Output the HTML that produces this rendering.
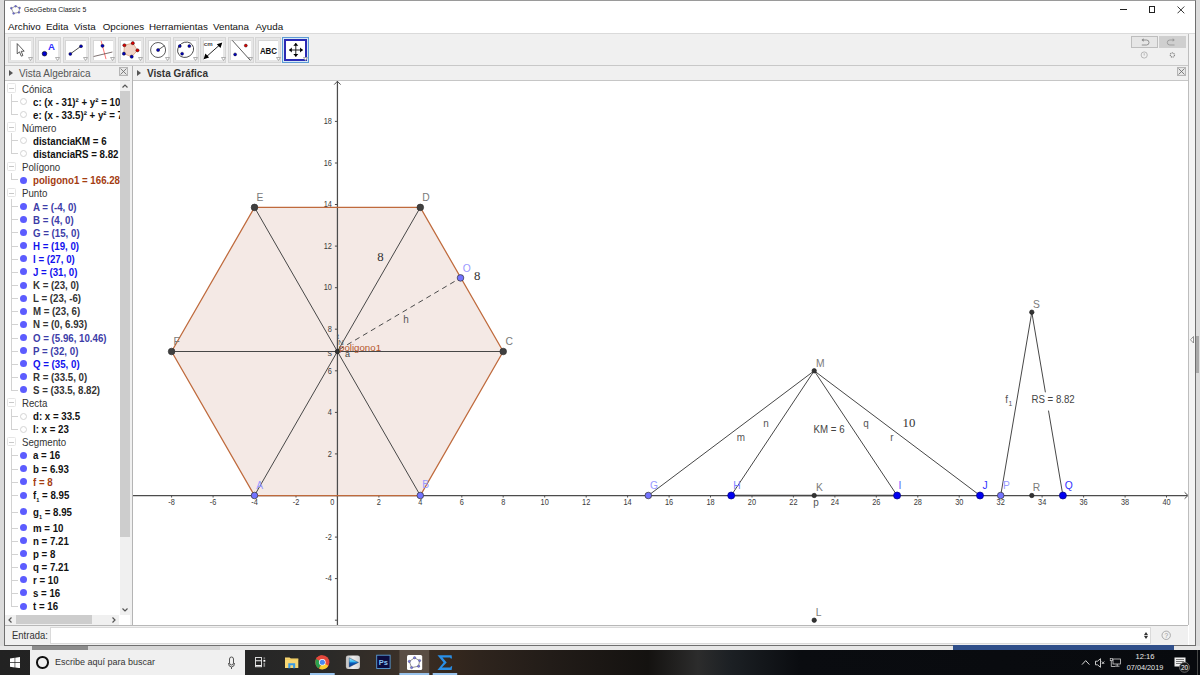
<!DOCTYPE html><html><head><meta charset="utf-8"><style>
*{margin:0;padding:0;box-sizing:border-box}
html,body{width:1200px;height:675px;overflow:hidden;background:#dcdcdc;font-family:"Liberation Sans", sans-serif;}
.a{position:absolute;white-space:nowrap}
</style></head><body>
<div class="a" style="left:4px;top:0;width:1192px;height:646px;background:#fff;border:1px solid #6f6f6f;border-top-color:#9a9a9a"></div>
<svg class="a" style="left:9.5px;top:4.5px" width="11" height="10" viewBox="0 0 11 10">
<path d="M5.6 1.2 L9.6 2.9 L8.9 7.4 L3.6 8.4 L1.3 3.2 Z" fill="none" stroke="#8a8a8a" stroke-width="0.8"/>
<g fill="#6e6ee0" stroke="#3a3a6a" stroke-width="0.3"><circle cx="5.6" cy="1.2" r="0.95"/><circle cx="9.6" cy="2.9" r="0.95"/><circle cx="8.9" cy="7.4" r="0.95"/><circle cx="3.6" cy="8.4" r="0.95"/><circle cx="1.3" cy="3.2" r="0.95"/></g></svg>
<div class="a" style="left:23.5px;top:5.74px;font-size:8.1px;line-height:1;color:#1a1a1a;transform:scaleX(0.855);transform-origin:0 0">GeoGebra Classic 5</div>
<div class="a" style="left:1120.4px;top:9px;width:6.6px;height:1px;background:#222"></div>
<div class="a" style="left:1148.6px;top:6px;width:6.6px;height:6.9px;border:1px solid #222"></div>
<svg class="a" style="left:1176.5px;top:5.8px" width="8" height="8" viewBox="0 0 8 8"><path d="M0.5 0.5L7.3 7.3M7.3 0.5L0.5 7.3" stroke="#222" stroke-width="0.9"/></svg>
<div class="a" style="left:8px;top:22.30px;font-size:9.8px;line-height:1;color:#111">Archivo</div>
<div class="a" style="left:46px;top:22.30px;font-size:9.8px;line-height:1;color:#111">Edita</div>
<div class="a" style="left:74px;top:22.30px;font-size:9.8px;line-height:1;color:#111">Vista</div>
<div class="a" style="left:102.7px;top:22.30px;font-size:9.8px;line-height:1;color:#111">Opciones</div>
<div class="a" style="left:149px;top:22.30px;font-size:9.8px;line-height:1;color:#111">Herramientas</div>
<div class="a" style="left:213px;top:22.30px;font-size:9.8px;line-height:1;color:#111">Ventana</div>
<div class="a" style="left:255.5px;top:22.30px;font-size:9.8px;line-height:1;color:#111">Ayuda</div>
<div class="a" style="left:5px;top:33px;width:1190px;height:1px;background:#dadada"></div>
<div class="a" style="left:5px;top:34px;width:1183px;height:32px;background:#f0f0f0;border-bottom:1px solid #c8c8c8"></div>
<div class="a" style="left:1188px;top:34px;width:1px;height:591px;background:#bdbdbd"></div>
<div class="a" style="left:1189px;top:34px;width:6px;height:611px;background:#f4f4f4"></div>
<div class="a" style="left:7.50px;top:37px;width:26px;height:26px;background:#e6e6e6;border:1px solid #d6d6d6"></div>
<div class="a" style="left:10.00px;top:40px;width:20.5px;height:19.5px;background:#fff;border-top:1px solid #d6d6d6;border-left:1px solid #d6d6d6"></div>
<svg class="a" style="left:27.70px;top:57px" width="5" height="4"><path d="M0.5 0.5 L4.5 0.5 L2.5 3.5Z" fill="#fff" stroke="#9a9a9a" stroke-width="0.8"/></svg>
<div class="a" style="left:35.05px;top:37px;width:26px;height:26px;background:#e6e6e6;border:1px solid #d6d6d6"></div>
<div class="a" style="left:37.55px;top:40px;width:20.5px;height:19.5px;background:#fff;border-top:1px solid #d6d6d6;border-left:1px solid #d6d6d6"></div>
<svg class="a" style="left:55.25px;top:57px" width="5" height="4"><path d="M0.5 0.5 L4.5 0.5 L2.5 3.5Z" fill="#fff" stroke="#9a9a9a" stroke-width="0.8"/></svg>
<div class="a" style="left:62.60px;top:37px;width:26px;height:26px;background:#e6e6e6;border:1px solid #d6d6d6"></div>
<div class="a" style="left:65.10px;top:40px;width:20.5px;height:19.5px;background:#fff;border-top:1px solid #d6d6d6;border-left:1px solid #d6d6d6"></div>
<svg class="a" style="left:82.80px;top:57px" width="5" height="4"><path d="M0.5 0.5 L4.5 0.5 L2.5 3.5Z" fill="#fff" stroke="#9a9a9a" stroke-width="0.8"/></svg>
<div class="a" style="left:90.15px;top:37px;width:26px;height:26px;background:#e6e6e6;border:1px solid #d6d6d6"></div>
<div class="a" style="left:92.65px;top:40px;width:20.5px;height:19.5px;background:#fff;border-top:1px solid #d6d6d6;border-left:1px solid #d6d6d6"></div>
<svg class="a" style="left:110.35px;top:57px" width="5" height="4"><path d="M0.5 0.5 L4.5 0.5 L2.5 3.5Z" fill="#fff" stroke="#9a9a9a" stroke-width="0.8"/></svg>
<div class="a" style="left:117.70px;top:37px;width:26px;height:26px;background:#e6e6e6;border:1px solid #d6d6d6"></div>
<div class="a" style="left:120.20px;top:40px;width:20.5px;height:19.5px;background:#fff;border-top:1px solid #d6d6d6;border-left:1px solid #d6d6d6"></div>
<svg class="a" style="left:137.90px;top:57px" width="5" height="4"><path d="M0.5 0.5 L4.5 0.5 L2.5 3.5Z" fill="#fff" stroke="#9a9a9a" stroke-width="0.8"/></svg>
<div class="a" style="left:145.25px;top:37px;width:26px;height:26px;background:#e6e6e6;border:1px solid #d6d6d6"></div>
<div class="a" style="left:147.75px;top:40px;width:20.5px;height:19.5px;background:#fff;border-top:1px solid #d6d6d6;border-left:1px solid #d6d6d6"></div>
<svg class="a" style="left:165.45px;top:57px" width="5" height="4"><path d="M0.5 0.5 L4.5 0.5 L2.5 3.5Z" fill="#fff" stroke="#9a9a9a" stroke-width="0.8"/></svg>
<div class="a" style="left:172.80px;top:37px;width:26px;height:26px;background:#e6e6e6;border:1px solid #d6d6d6"></div>
<div class="a" style="left:175.30px;top:40px;width:20.5px;height:19.5px;background:#fff;border-top:1px solid #d6d6d6;border-left:1px solid #d6d6d6"></div>
<svg class="a" style="left:193.00px;top:57px" width="5" height="4"><path d="M0.5 0.5 L4.5 0.5 L2.5 3.5Z" fill="#fff" stroke="#9a9a9a" stroke-width="0.8"/></svg>
<div class="a" style="left:200.35px;top:37px;width:26px;height:26px;background:#e6e6e6;border:1px solid #d6d6d6"></div>
<div class="a" style="left:202.85px;top:40px;width:20.5px;height:19.5px;background:#fff;border-top:1px solid #d6d6d6;border-left:1px solid #d6d6d6"></div>
<svg class="a" style="left:220.55px;top:57px" width="5" height="4"><path d="M0.5 0.5 L4.5 0.5 L2.5 3.5Z" fill="#fff" stroke="#9a9a9a" stroke-width="0.8"/></svg>
<div class="a" style="left:227.90px;top:37px;width:26px;height:26px;background:#e6e6e6;border:1px solid #d6d6d6"></div>
<div class="a" style="left:230.40px;top:40px;width:20.5px;height:19.5px;background:#fff;border-top:1px solid #d6d6d6;border-left:1px solid #d6d6d6"></div>
<svg class="a" style="left:248.10px;top:57px" width="5" height="4"><path d="M0.5 0.5 L4.5 0.5 L2.5 3.5Z" fill="#fff" stroke="#9a9a9a" stroke-width="0.8"/></svg>
<div class="a" style="left:255.45px;top:37px;width:26px;height:26px;background:#e6e6e6;border:1px solid #d6d6d6"></div>
<div class="a" style="left:257.95px;top:40px;width:20.5px;height:19.5px;background:#fff;border-top:1px solid #d6d6d6;border-left:1px solid #d6d6d6"></div>
<svg class="a" style="left:275.65px;top:57px" width="5" height="4"><path d="M0.5 0.5 L4.5 0.5 L2.5 3.5Z" fill="#fff" stroke="#9a9a9a" stroke-width="0.8"/></svg>
<div class="a" style="left:282.4px;top:37.2px;width:26.2px;height:25.7px;border:1px solid #5d9bd5;background:#d6e8f6"></div>
<div class="a" style="left:284.4px;top:39.2px;width:22.4px;height:21.8px;border:2px solid #2a2ab4;background:#fff"></div>
<svg class="a" style="left:302.5px;top:57px" width="5" height="4"><path d="M0.5 0.5 L4.5 0.5 L2.5 3.5Z" fill="#fff" stroke="#9a9a9a" stroke-width="0.8"/></svg>
<svg class="a" style="left:0;top:0" width="320" height="66" viewBox="0 0 320 66"><path d="M17.2 43.6 L17.2 53.8 L19.5 51.9 L21.3 56.2 L22.9 55.5 L21.2 51.3 L24.2 51.2 Z" fill="#fff" stroke="#2a2a2a" stroke-width="0.75" stroke-linejoin="round"/><circle cx="44.5" cy="53.7" r="2.3" fill="#0000d0" stroke="#000" stroke-width="0.6"/><text x="51.5" y="50.2" font-size="9.6" font-weight="bold" fill="#2f2fff" text-anchor="middle" font-family="Liberation Sans">A</text><line x1="70.3" y1="53.9" x2="81" y2="46.2" stroke="#222" stroke-width="0.8"/><circle cx="70.3" cy="53.9" r="1.5" fill="#0000c0" stroke="#000" stroke-width="0.4"/><circle cx="81" cy="46.2" r="1.5" fill="#0000c0" stroke="#000" stroke-width="0.4"/><line x1="101.1" y1="40.8" x2="106" y2="59.1" stroke="#ff5050" stroke-width="0.8"/><line x1="93.6" y1="56.5" x2="112.4" y2="52" stroke="#5a4a4a" stroke-width="0.8"/><circle cx="102.5" cy="45.8" r="1.6" fill="#0000c0" stroke="#000" stroke-width="0.4"/><polygon points="124.4,45.25 132.8,43.15 137.5,50.3 131.7,56.7 123.9,53.7" fill="#f0d6c8" stroke="#e0a888" stroke-width="0.9"/><g stroke="#000" stroke-width="0.4"><circle cx="124.4" cy="45.25" r="1.6" fill="#e00000"/><circle cx="132.8" cy="43.15" r="1.6" fill="#e00000"/><circle cx="137.5" cy="50.3" r="1.6" fill="#e00000"/><circle cx="131.7" cy="56.7" r="1.6" fill="#0000c0"/><circle cx="123.9" cy="53.7" r="1.6" fill="#0000c0"/></g><circle cx="158.1" cy="50" r="7.5" fill="none" stroke="#333" stroke-width="0.8"/><line x1="158.1" y1="50" x2="164.5" y2="45.6" stroke="#333" stroke-width="0.8"/><circle cx="158.1" cy="50" r="1.6" fill="#0000c0" stroke="#000" stroke-width="0.4"/><ellipse cx="185.6" cy="49.75" rx="8.3" ry="7.4" transform="rotate(-35 185.6 49.75)" fill="none" stroke="#333" stroke-width="0.8"/><g fill="#0000c0" stroke="#000" stroke-width="0.4"><circle cx="179.8" cy="46.1" r="1.5"/><circle cx="189.3" cy="46.1" r="1.5"/><circle cx="182.1" cy="53.7" r="1.5"/></g><text x="203.8" y="46.4" font-size="6.2" font-weight="bold" fill="#444" font-family="Liberation Sans" textLength="8.8" lengthAdjust="spacingAndGlyphs">cm</text><line x1="205.5" y1="57.5" x2="220.5" y2="44.2" stroke="#111" stroke-width="0.9"/><path d="M203.6 59.3 L205.4 53.6 L209.1 57.5 Z M222.3 42.4 L220.5 48.1 L216.8 44.2 Z" fill="#000"/><line x1="232.3" y1="40.4" x2="249.9" y2="59.9" stroke="#333" stroke-width="0.8"/><circle cx="245.8" cy="45.6" r="1.5" fill="#e00000" stroke="#000" stroke-width="0.4"/><circle cx="235.1" cy="54.4" r="1.5" fill="#0000c0" stroke="#000" stroke-width="0.4"/><text x="268.5" y="53.5" font-size="8.6" font-weight="bold" fill="#111" text-anchor="middle" font-family="Liberation Sans" textLength="17.2" lengthAdjust="spacingAndGlyphs">ABC</text><path d="M289.1 50 H302.8 M295.8 43 V56.75" stroke="#111" stroke-width="0.9"/><path d="M289.1 50 L291.8 47.5 V52.5Z M302.8 50 L300.1 47.5 V52.5Z M295.8 43 L293.3 45.7 H298.3Z M295.8 56.75 L293.3 54 H298.3Z" fill="#000"/></svg>
<div class="a" style="left:1131px;top:36px;width:27px;height:12px;background:#e6e6e6;border:1px solid #bdbdbd"></div>
<div class="a" style="left:1159px;top:36px;width:27px;height:12px;background:#cfcfcf"></div>
<svg class="a" style="left:0;top:0" width="1200" height="66" viewBox="0 0 1200 66"><path d="M1142.3 40H1146.5A2.5 2.5 0 0 1 1146.5 45H1141.8" fill="none" stroke="#888" stroke-width="0.9"/><path d="M1141.5 40L1143.6 38.3V41.7Z" fill="#888"/><path d="M1174 40H1169.8A2.5 2.5 0 0 0 1169.8 45H1174.5" fill="none" stroke="#999" stroke-width="0.9"/><path d="M1174.8 40L1172.7 38.3V41.7Z" fill="#999"/><circle cx="1144.2" cy="55" r="3.1" fill="none" stroke="#aaa" stroke-width="0.8"/><path d="M1144.2 53.2V55.5" stroke="#aaa" stroke-width="0.8"/><circle cx="1172.4" cy="55" r="2.1" fill="none" stroke="#888" stroke-width="1.2" stroke-dasharray="1.1 0.55"/></svg>
<div class="a" style="left:5px;top:66px;width:125px;height:15px;background:#f0f0f0;border-bottom:1px solid #c6c6c6"></div>
<div class="a" style="left:133px;top:66px;width:1055px;height:15px;background:#f0f0f0;border-bottom:1px solid #c6c6c6"></div>
<div class="a" style="left:130px;top:66px;width:3px;height:560px;background:#f0f0f0;border-right:1px solid #b4b4b4"></div>
<div class="a" style="left:9px;top:70px;width:0;height:0;border-left:4px solid #555;border-top:3px solid transparent;border-bottom:3px solid transparent"></div>
<div class="a" style="left:19px;top:68px;font-size:10px;color:#555">Vista Algebraica</div>
<div class="a" style="left:137px;top:70px;width:0;height:0;border-left:4px solid #555;border-top:3px solid transparent;border-bottom:3px solid transparent"></div>
<div class="a" style="left:147px;top:68px;font-size:10px;font-weight:bold;color:#333">Vista Gráfica</div>
<svg class="a" style="left:119px;top:67px" width="9" height="9" viewBox="0 0 9 9"><rect x="0.5" y="0.5" width="8" height="8" fill="#e6e6e6" stroke="#b5b5b5"/><path d="M1.5 1.5L7.5 7.5M7.5 1.5L1.5 7.5" stroke="#666" stroke-width="0.8"/></svg>
<svg class="a" style="left:1177px;top:67px" width="9" height="9" viewBox="0 0 9 9"><rect x="0.5" y="0.5" width="8" height="8" fill="#e6e6e6" stroke="#b5b5b5"/><path d="M1.5 1.5L7.5 7.5M7.5 1.5L1.5 7.5" stroke="#666" stroke-width="0.8"/></svg>
<div class="a" style="left:5px;top:81px;width:125px;height:534px;background:#fff;overflow:hidden">
<div class="a" style="left:1.5px;top:2.1px;width:9.3px;height:9.5px;border:1px solid #e6e6e6;border-radius:1.5px;background:#fff"></div>
<div class="a" style="left:3.7px;top:6.8px;width:5px;height:1px;background:#c8c8c8"></div>
<div class="a" style="left:6.0px;top:13.1px;width:1px;height:20.4px;background:#d2d2d2"></div>
<div class="a" style="left:6.0px;top:19.8px;width:7px;height:1px;background:#d2d2d2"></div>
<div class="a" style="left:6.0px;top:32.9px;width:7px;height:1px;background:#d2d2d2"></div>
<div class="a" style="left:1.5px;top:41.4px;width:9.3px;height:9.5px;border:1px solid #e6e6e6;border-radius:1.5px;background:#fff"></div>
<div class="a" style="left:3.7px;top:46.1px;width:5px;height:1px;background:#c8c8c8"></div>
<div class="a" style="left:6.0px;top:52.4px;width:1px;height:20.4px;background:#d2d2d2"></div>
<div class="a" style="left:6.0px;top:59.1px;width:7px;height:1px;background:#d2d2d2"></div>
<div class="a" style="left:6.0px;top:72.2px;width:7px;height:1px;background:#d2d2d2"></div>
<div class="a" style="left:1.5px;top:80.7px;width:9.3px;height:9.5px;border:1px solid #e6e6e6;border-radius:1.5px;background:#fff"></div>
<div class="a" style="left:3.7px;top:85.4px;width:5px;height:1px;background:#c8c8c8"></div>
<div class="a" style="left:6.0px;top:91.7px;width:1px;height:7.3px;background:#d2d2d2"></div>
<div class="a" style="left:6.0px;top:98.4px;width:7px;height:1px;background:#d2d2d2"></div>
<div class="a" style="left:1.5px;top:106.9px;width:9.3px;height:9.5px;border:1px solid #e6e6e6;border-radius:1.5px;background:#fff"></div>
<div class="a" style="left:3.7px;top:111.6px;width:5px;height:1px;background:#c8c8c8"></div>
<div class="a" style="left:6.0px;top:117.9px;width:1px;height:191.6px;background:#d2d2d2"></div>
<div class="a" style="left:6.0px;top:124.6px;width:7px;height:1px;background:#d2d2d2"></div>
<div class="a" style="left:6.0px;top:137.7px;width:7px;height:1px;background:#d2d2d2"></div>
<div class="a" style="left:6.0px;top:150.8px;width:7px;height:1px;background:#d2d2d2"></div>
<div class="a" style="left:6.0px;top:164.8px;width:7px;height:1px;background:#d2d2d2"></div>
<div class="a" style="left:6.0px;top:177.9px;width:7px;height:1px;background:#d2d2d2"></div>
<div class="a" style="left:6.0px;top:191.0px;width:7px;height:1px;background:#d2d2d2"></div>
<div class="a" style="left:6.0px;top:204.1px;width:7px;height:1px;background:#d2d2d2"></div>
<div class="a" style="left:6.0px;top:217.2px;width:7px;height:1px;background:#d2d2d2"></div>
<div class="a" style="left:6.0px;top:230.3px;width:7px;height:1px;background:#d2d2d2"></div>
<div class="a" style="left:6.0px;top:243.4px;width:7px;height:1px;background:#d2d2d2"></div>
<div class="a" style="left:6.0px;top:256.5px;width:7px;height:1px;background:#d2d2d2"></div>
<div class="a" style="left:6.0px;top:269.6px;width:7px;height:1px;background:#d2d2d2"></div>
<div class="a" style="left:6.0px;top:282.7px;width:7px;height:1px;background:#d2d2d2"></div>
<div class="a" style="left:6.0px;top:295.8px;width:7px;height:1px;background:#d2d2d2"></div>
<div class="a" style="left:6.0px;top:308.9px;width:7px;height:1px;background:#d2d2d2"></div>
<div class="a" style="left:1.5px;top:316.5px;width:9.3px;height:9.5px;border:1px solid #e6e6e6;border-radius:1.5px;background:#fff"></div>
<div class="a" style="left:3.7px;top:321.2px;width:5px;height:1px;background:#c8c8c8"></div>
<div class="a" style="left:6.0px;top:327.5px;width:1px;height:21.3px;background:#d2d2d2"></div>
<div class="a" style="left:6.0px;top:335.1px;width:7px;height:1px;background:#d2d2d2"></div>
<div class="a" style="left:6.0px;top:348.2px;width:7px;height:1px;background:#d2d2d2"></div>
<div class="a" style="left:1.5px;top:355.8px;width:9.3px;height:9.5px;border:1px solid #e6e6e6;border-radius:1.5px;background:#fff"></div>
<div class="a" style="left:3.7px;top:360.5px;width:5px;height:1px;background:#c8c8c8"></div>
<div class="a" style="left:6.0px;top:366.8px;width:1px;height:158.9px;background:#d2d2d2"></div>
<div class="a" style="left:6.0px;top:374.4px;width:7px;height:1px;background:#d2d2d2"></div>
<div class="a" style="left:6.0px;top:387.5px;width:7px;height:1px;background:#d2d2d2"></div>
<div class="a" style="left:6.0px;top:400.6px;width:7px;height:1px;background:#d2d2d2"></div>
<div class="a" style="left:6.0px;top:414.4px;width:7px;height:1px;background:#d2d2d2"></div>
<div class="a" style="left:6.0px;top:430.5px;width:7px;height:1px;background:#d2d2d2"></div>
<div class="a" style="left:6.0px;top:446.5px;width:7px;height:1px;background:#d2d2d2"></div>
<div class="a" style="left:6.0px;top:459.6px;width:7px;height:1px;background:#d2d2d2"></div>
<div class="a" style="left:6.0px;top:472.7px;width:7px;height:1px;background:#d2d2d2"></div>
<div class="a" style="left:6.0px;top:485.8px;width:7px;height:1px;background:#d2d2d2"></div>
<div class="a" style="left:6.0px;top:498.9px;width:7px;height:1px;background:#d2d2d2"></div>
<div class="a" style="left:6.0px;top:512.0px;width:7px;height:1px;background:#d2d2d2"></div>
<div class="a" style="left:6.0px;top:525.1px;width:7px;height:1px;background:#d2d2d2"></div>
<div class="a" style="left:16.9px;top:2.6px;font-size:10.3px;line-height:12px;transform:scaleX(0.94);transform-origin:0 0;color:#333">Cónica</div>
<div class="a" style="left:14.6px;top:16.8px;width:7px;height:7px;border-radius:50%;border:1px solid #d4d4d4;background:#fff"></div>
<div class="a" style="left:28.3px;top:15.7px;font-size:10.4px;line-height:12px;font-weight:bold;transform:scaleX(0.933);transform-origin:0 0;color:#111">c: (x - 31)² + y² = 100</div>
<div class="a" style="left:14.6px;top:29.9px;width:7px;height:7px;border-radius:50%;border:1px solid #d4d4d4;background:#fff"></div>
<div class="a" style="left:28.3px;top:28.8px;font-size:10.4px;line-height:12px;font-weight:bold;transform:scaleX(0.933);transform-origin:0 0;color:#111">e: (x - 33.5)² + y² = 77.79</div>
<div class="a" style="left:16.9px;top:41.9px;font-size:10.3px;line-height:12px;transform:scaleX(0.94);transform-origin:0 0;color:#333">Número</div>
<div class="a" style="left:14.6px;top:56.1px;width:7px;height:7px;border-radius:50%;border:1px solid #d4d4d4;background:#fff"></div>
<div class="a" style="left:28.3px;top:55.0px;font-size:10.4px;line-height:12px;font-weight:bold;transform:scaleX(0.933);transform-origin:0 0;color:#111">distanciaKM = 6</div>
<div class="a" style="left:14.6px;top:69.2px;width:7px;height:7px;border-radius:50%;border:1px solid #d4d4d4;background:#fff"></div>
<div class="a" style="left:28.3px;top:68.1px;font-size:10.4px;line-height:12px;font-weight:bold;transform:scaleX(0.933);transform-origin:0 0;color:#111">distanciaRS = 8.82</div>
<div class="a" style="left:16.9px;top:81.2px;font-size:10.3px;line-height:12px;transform:scaleX(0.94);transform-origin:0 0;color:#333">Polígono</div>
<div class="a" style="left:14.5px;top:95.7px;width:7px;height:7px;border-radius:50%;background:#5c5cff"></div>
<div class="a" style="left:28.3px;top:94.3px;font-size:10.4px;line-height:12px;font-weight:bold;transform:scaleX(0.933);transform-origin:0 0;color:#a43d12">poligono1 = 166.28</div>
<div class="a" style="left:16.9px;top:107.4px;font-size:10.3px;line-height:12px;transform:scaleX(0.94);transform-origin:0 0;color:#333">Punto</div>
<div class="a" style="left:14.5px;top:121.9px;width:7px;height:7px;border-radius:50%;background:#5c5cff"></div>
<div class="a" style="left:28.3px;top:120.5px;font-size:10.4px;line-height:12px;font-weight:bold;transform:scaleX(0.933);transform-origin:0 0;color:#3d3da8">A = (-4, 0)</div>
<div class="a" style="left:14.5px;top:135.0px;width:7px;height:7px;border-radius:50%;background:#5c5cff"></div>
<div class="a" style="left:28.3px;top:133.6px;font-size:10.4px;line-height:12px;font-weight:bold;transform:scaleX(0.933);transform-origin:0 0;color:#3d3da8">B = (4, 0)</div>
<div class="a" style="left:14.5px;top:148.1px;width:7px;height:7px;border-radius:50%;background:#5c5cff"></div>
<div class="a" style="left:28.3px;top:146.7px;font-size:10.4px;line-height:12px;font-weight:bold;transform:scaleX(0.933);transform-origin:0 0;color:#3d3da8">G = (15, 0)</div>
<div class="a" style="left:14.5px;top:161.2px;width:7px;height:7px;border-radius:50%;background:#5c5cff"></div>
<div class="a" style="left:28.3px;top:159.8px;font-size:10.4px;line-height:12px;font-weight:bold;transform:scaleX(0.933);transform-origin:0 0;color:#1111ee">H = (19, 0)</div>
<div class="a" style="left:14.5px;top:174.3px;width:7px;height:7px;border-radius:50%;background:#5c5cff"></div>
<div class="a" style="left:28.3px;top:172.9px;font-size:10.4px;line-height:12px;font-weight:bold;transform:scaleX(0.933);transform-origin:0 0;color:#1111ee">I = (27, 0)</div>
<div class="a" style="left:14.5px;top:187.4px;width:7px;height:7px;border-radius:50%;background:#5c5cff"></div>
<div class="a" style="left:28.3px;top:186.0px;font-size:10.4px;line-height:12px;font-weight:bold;transform:scaleX(0.933);transform-origin:0 0;color:#1111ee">J = (31, 0)</div>
<div class="a" style="left:14.5px;top:200.5px;width:7px;height:7px;border-radius:50%;background:#5c5cff"></div>
<div class="a" style="left:28.3px;top:199.1px;font-size:10.4px;line-height:12px;font-weight:bold;transform:scaleX(0.933);transform-origin:0 0;color:#333">K = (23, 0)</div>
<div class="a" style="left:14.5px;top:213.6px;width:7px;height:7px;border-radius:50%;background:#5c5cff"></div>
<div class="a" style="left:28.3px;top:212.2px;font-size:10.4px;line-height:12px;font-weight:bold;transform:scaleX(0.933);transform-origin:0 0;color:#333">L = (23, -6)</div>
<div class="a" style="left:14.5px;top:226.7px;width:7px;height:7px;border-radius:50%;background:#5c5cff"></div>
<div class="a" style="left:28.3px;top:225.3px;font-size:10.4px;line-height:12px;font-weight:bold;transform:scaleX(0.933);transform-origin:0 0;color:#333">M = (23, 6)</div>
<div class="a" style="left:14.5px;top:239.8px;width:7px;height:7px;border-radius:50%;background:#5c5cff"></div>
<div class="a" style="left:28.3px;top:238.4px;font-size:10.4px;line-height:12px;font-weight:bold;transform:scaleX(0.933);transform-origin:0 0;color:#333">N = (0, 6.93)</div>
<div class="a" style="left:14.5px;top:252.9px;width:7px;height:7px;border-radius:50%;background:#5c5cff"></div>
<div class="a" style="left:28.3px;top:251.5px;font-size:10.4px;line-height:12px;font-weight:bold;transform:scaleX(0.933);transform-origin:0 0;color:#3d3da8">O = (5.96, 10.46)</div>
<div class="a" style="left:14.5px;top:266.0px;width:7px;height:7px;border-radius:50%;background:#5c5cff"></div>
<div class="a" style="left:28.3px;top:264.6px;font-size:10.4px;line-height:12px;font-weight:bold;transform:scaleX(0.933);transform-origin:0 0;color:#3d3da8">P = (32, 0)</div>
<div class="a" style="left:14.5px;top:279.1px;width:7px;height:7px;border-radius:50%;background:#5c5cff"></div>
<div class="a" style="left:28.3px;top:277.7px;font-size:10.4px;line-height:12px;font-weight:bold;transform:scaleX(0.933);transform-origin:0 0;color:#1111ee">Q = (35, 0)</div>
<div class="a" style="left:14.5px;top:292.2px;width:7px;height:7px;border-radius:50%;background:#5c5cff"></div>
<div class="a" style="left:28.3px;top:290.8px;font-size:10.4px;line-height:12px;font-weight:bold;transform:scaleX(0.933);transform-origin:0 0;color:#333">R = (33.5, 0)</div>
<div class="a" style="left:14.5px;top:305.3px;width:7px;height:7px;border-radius:50%;background:#5c5cff"></div>
<div class="a" style="left:28.3px;top:303.9px;font-size:10.4px;line-height:12px;font-weight:bold;transform:scaleX(0.933);transform-origin:0 0;color:#333">S = (33.5, 8.82)</div>
<div class="a" style="left:16.9px;top:317.0px;font-size:10.3px;line-height:12px;transform:scaleX(0.94);transform-origin:0 0;color:#333">Recta</div>
<div class="a" style="left:14.6px;top:331.7px;width:7px;height:7px;border-radius:50%;border:1px solid #d4d4d4;background:#fff"></div>
<div class="a" style="left:28.3px;top:330.1px;font-size:10.4px;line-height:12px;font-weight:bold;transform:scaleX(0.933);transform-origin:0 0;color:#111">d: x = 33.5</div>
<div class="a" style="left:14.6px;top:344.8px;width:7px;height:7px;border-radius:50%;border:1px solid #d4d4d4;background:#fff"></div>
<div class="a" style="left:28.3px;top:343.2px;font-size:10.4px;line-height:12px;font-weight:bold;transform:scaleX(0.933);transform-origin:0 0;color:#111">l: x = 23</div>
<div class="a" style="left:16.9px;top:356.3px;font-size:10.3px;line-height:12px;transform:scaleX(0.94);transform-origin:0 0;color:#333">Segmento</div>
<div class="a" style="left:14.5px;top:370.8px;width:7px;height:7px;border-radius:50%;background:#5c5cff"></div>
<div class="a" style="left:28.3px;top:369.4px;font-size:10.4px;line-height:12px;font-weight:bold;transform:scaleX(0.933);transform-origin:0 0;color:#111">a = 16</div>
<div class="a" style="left:14.5px;top:383.9px;width:7px;height:7px;border-radius:50%;background:#5c5cff"></div>
<div class="a" style="left:28.3px;top:382.5px;font-size:10.4px;line-height:12px;font-weight:bold;transform:scaleX(0.933);transform-origin:0 0;color:#111">b = 6.93</div>
<div class="a" style="left:14.5px;top:397.0px;width:7px;height:7px;border-radius:50%;background:#5c5cff"></div>
<div class="a" style="left:28.3px;top:395.6px;font-size:10.4px;line-height:12px;font-weight:bold;transform:scaleX(0.933);transform-origin:0 0;color:#a43d12">f = 8</div>
<div class="a" style="left:14.5px;top:410.8px;width:7px;height:7px;border-radius:50%;background:#5c5cff"></div>
<div class="a" style="left:28.3px;top:409.4px;font-size:10.4px;line-height:12px;font-weight:bold;transform:scaleX(0.933);transform-origin:0 0;color:#111">f<sub style="font-size:6px;vertical-align:-3px">1</sub> = 8.95</div>
<div class="a" style="left:14.5px;top:426.9px;width:7px;height:7px;border-radius:50%;background:#5c5cff"></div>
<div class="a" style="left:28.3px;top:425.5px;font-size:10.4px;line-height:12px;font-weight:bold;transform:scaleX(0.933);transform-origin:0 0;color:#111">g<sub style="font-size:6px;vertical-align:-3px">1</sub> = 8.95</div>
<div class="a" style="left:14.5px;top:442.9px;width:7px;height:7px;border-radius:50%;background:#5c5cff"></div>
<div class="a" style="left:28.3px;top:441.5px;font-size:10.4px;line-height:12px;font-weight:bold;transform:scaleX(0.933);transform-origin:0 0;color:#111">m = 10</div>
<div class="a" style="left:14.5px;top:456.0px;width:7px;height:7px;border-radius:50%;background:#5c5cff"></div>
<div class="a" style="left:28.3px;top:454.6px;font-size:10.4px;line-height:12px;font-weight:bold;transform:scaleX(0.933);transform-origin:0 0;color:#111">n = 7.21</div>
<div class="a" style="left:14.5px;top:469.1px;width:7px;height:7px;border-radius:50%;background:#5c5cff"></div>
<div class="a" style="left:28.3px;top:467.7px;font-size:10.4px;line-height:12px;font-weight:bold;transform:scaleX(0.933);transform-origin:0 0;color:#111">p = 8</div>
<div class="a" style="left:14.5px;top:482.2px;width:7px;height:7px;border-radius:50%;background:#5c5cff"></div>
<div class="a" style="left:28.3px;top:480.8px;font-size:10.4px;line-height:12px;font-weight:bold;transform:scaleX(0.933);transform-origin:0 0;color:#111">q = 7.21</div>
<div class="a" style="left:14.5px;top:495.3px;width:7px;height:7px;border-radius:50%;background:#5c5cff"></div>
<div class="a" style="left:28.3px;top:493.9px;font-size:10.4px;line-height:12px;font-weight:bold;transform:scaleX(0.933);transform-origin:0 0;color:#111">r = 10</div>
<div class="a" style="left:14.5px;top:508.4px;width:7px;height:7px;border-radius:50%;background:#5c5cff"></div>
<div class="a" style="left:28.3px;top:507.0px;font-size:10.4px;line-height:12px;font-weight:bold;transform:scaleX(0.933);transform-origin:0 0;color:#111">s = 16</div>
<div class="a" style="left:14.5px;top:521.5px;width:7px;height:7px;border-radius:50%;background:#5c5cff"></div>
<div class="a" style="left:28.3px;top:520.1px;font-size:10.4px;line-height:12px;font-weight:bold;transform:scaleX(0.933);transform-origin:0 0;color:#111">t = 16</div>
<div class="a" style="left:115px;top:0;width:10px;height:534px;background:#f0f0f0"></div>
<div class="a" style="left:115px;top:10px;width:10px;height:446px;background:#cdcdcd"></div>
</div>
<svg class="a" style="left:121px;top:83px" width="8" height="6"><path d="M1.5 4.5L4 2L6.5 4.5" fill="none" stroke="#555" stroke-width="1.2"/></svg>
<svg class="a" style="left:121px;top:606.5px" width="8" height="6"><path d="M1.5 1.5L4 4L6.5 1.5" fill="none" stroke="#555" stroke-width="1.2"/></svg>
<div class="a" style="left:5px;top:615px;width:114px;height:10px;background:#f0f0f0"></div>
<div class="a" style="left:16px;top:615px;width:76px;height:9px;background:#cdcdcd"></div>
<div class="a" style="left:119px;top:615px;width:11px;height:10px;background:#fff"></div>
<svg class="a" style="left:7px;top:616px" width="6" height="8"><path d="M4.5 1.5L2 4L4.5 6.5" fill="none" stroke="#555" stroke-width="1.2"/></svg>
<svg class="a" style="left:111px;top:616px" width="6" height="8"><path d="M1.5 1.5L4 4L1.5 6.5" fill="none" stroke="#555" stroke-width="1.2"/></svg>
<div class="a" style="left:5px;top:625px;width:1183px;height:1px;background:#b8b8b8"></div>
<div class="a" style="left:5px;top:626px;width:1183px;height:19px;background:#f0f0f0"></div>
<div class="a" style="left:11.7px;top:630.97px;font-size:10.2px;line-height:1;color:#333;transform:scaleX(0.93);transform-origin:0 0">Entrada:</div>
<div class="a" style="left:49.5px;top:627.3px;width:1101.3px;height:16.3px;background:#fff;border:1px solid #dadada"></div>
<svg class="a" style="left:1142.5px;top:629.5px" width="6" height="12"><path d="M3 2L5 5H1Z M3 9L5 6H1Z" fill="#333"/><rect x="1" y="5.2" width="4" height="0.6" fill="#bbb"/></svg>
<svg class="a" style="left:1160px;top:629px" width="12" height="12"><circle cx="6.2" cy="6.3" r="4.2" fill="none" stroke="#999" stroke-width="0.8"/><text x="6.2" y="8.8" font-size="6.5" text-anchor="middle" fill="#999" font-family="Liberation Sans">?</text></svg>
<div class="a" style="left:0;top:646px;width:1200px;height:4px;background:#e6e6e6"></div>
<div class="a" style="left:32px;top:646px;width:188px;height:4px;background:#d6d6d6"></div>
<div class="a" style="left:32px;top:646px;width:56px;height:4px;background:#8c8c8c"></div>
<div class="a" style="left:953px;top:645px;width:221px;height:5px;background:#304f8a"></div>
<div class="a" style="left:0;top:650px;width:1200px;height:25px;background:linear-gradient(90deg,#222 0px,#262626 250px,#2b2a28 330px,#3a3028 400px,#35281e 450px,#2e241d 480px,#221c18 550px,#141210 648px,#2c2c2c 698px,#1c2024 730px,#0a0c10 800px,#080a0e 1200px)"></div>
<svg class="a" style="left:9.75px;top:656.75px" width="10.5" height="11.25" viewBox="0.5 0.3 12 12.3" preserveAspectRatio="none"><path d="M0.5 2L5.8 1.2V6.1H0.5Z M6.5 1.1L12.5 0.3V6.1H6.5Z M0.5 6.8H5.8V11.7L0.5 11Z M6.5 6.8H12.5V12.6L6.5 11.8Z" fill="#fff"/></svg>
<div class="a" style="left:30px;top:650px;width:215px;height:25px;background:#f0f0f0"></div>
<div class="a" style="left:36.25px;top:656.25px;width:12.5px;height:12.3px;border-radius:50%;border:2px solid #111"></div>
<div class="a" style="left:55px;top:658.38px;font-size:9px;line-height:1;color:#333">Escribe aquí para buscar</div>
<svg class="a" style="left:227px;top:655.5px" width="9" height="14"><rect x="2.5" y="1" width="4" height="8" rx="2" fill="none" stroke="#555" stroke-width="1"/><path d="M1.5 7Q1.5 11 4.5 11Q7.5 11 7.5 7M4.5 11V13" fill="none" stroke="#555" stroke-width="1"/></svg>
<svg class="a" style="left:0;top:0" width="1200" height="675" viewBox="0 0 1200 675"><rect x="255.5" y="657.5" width="6" height="9.2" fill="none" stroke="#d8d8d8" stroke-width="1"/><rect x="256" y="661.2" width="5" height="3.2" fill="#262626"/><path d="M255.5 660.7H261.5M255.5 665.5H261.5" stroke="#f4f4f4" stroke-width="1.1"/><rect x="263.5" y="657.3" width="1.6" height="1.8" fill="#777"/><rect x="263.4" y="659.9" width="1.9" height="1.8" fill="#fff"/><rect x="263.5" y="662.8" width="1.6" height="4" fill="#8a8a8a"/><path d="M285 657.5H289.5L290.8 658.6H298.3V668H285Z" fill="#f7d774"/><path d="M285 659.3H298.3" stroke="#e8c050" stroke-width="0.6"/><path d="M288.3 663.2H295.2V668.2H293.1V665.2H290.4V668.2H288.3Z" fill="#3a9be5"/><g transform="translate(322.3 662.25)"><circle r="7.1" fill="#e5483c"/><path d="M0 0 L6.15 3.55 A7.1 7.1 0 0 1 -3.1 6.4 Z" fill="#fbcc2e"/><path d="M0 0 L-3.55 6.15 A7.1 7.1 0 0 1 -6.15 -3.55 Z" fill="#2ba14d"/><path d="M0 0 L-6.15 -3.55 A7.1 7.1 0 0 1 0 -7.1 Z" fill="#e5483c"/><circle r="3.3" fill="#fff"/><circle r="2.6" fill="#4a87ee"/></g><rect x="310" y="673" width="24.7" height="2" fill="#99c3ec"/><defs><linearGradient id="mpg" x1="0" y1="0" x2="1" y2="0"><stop offset="0" stop-color="#bdbdbd"/><stop offset="0.5" stop-color="#eeeeee"/><stop offset="1" stop-color="#d0d0d0"/></linearGradient><linearGradient id="mpt" x1="0" y1="0" x2="0" y2="1"><stop offset="0" stop-color="#b8f4ff"/><stop offset="0.45" stop-color="#30b4f0"/><stop offset="0.55" stop-color="#0a5ab8"/><stop offset="1" stop-color="#0a3a90"/></linearGradient></defs><rect x="345.9" y="655.6" width="14" height="13.4" rx="2.2" fill="url(#mpg)"/><path d="M349.2 657.8 L358.5 662.4 L349.2 667Z" fill="url(#mpt)" stroke="#1a2a50" stroke-width="0.4"/><rect x="376.7" y="655.2" width="13.4" height="13.3" fill="#0b0b3e" stroke="#5a9ed8" stroke-width="0.9"/><text x="383.4" y="665.3" font-size="7.5" font-weight="bold" fill="#88c4f4" text-anchor="middle" font-family="Liberation Sans">Ps</text><rect x="399.4" y="650" width="29.8" height="25" fill="#5a4e44"/><rect x="407" y="655" width="15.2" height="15" rx="1.5" fill="#fff"/><path d="M414.6 657.8 L419.6 660.6 L418.6 666.2 L411.6 667.6 L409.3 661.4 Z" fill="none" stroke="#777" stroke-width="0.8"/><g fill="#7676e6" stroke="#333" stroke-width="0.3"><circle cx="414.6" cy="657.8" r="1.2"/><circle cx="419.6" cy="660.6" r="1.2"/><circle cx="418.6" cy="666.2" r="1.2"/><circle cx="411.6" cy="667.6" r="1.2"/><circle cx="409.3" cy="661.4" r="1.2"/></g><rect x="399.4" y="673" width="29.8" height="2" fill="#99c3ec"/><path d="M437.5 655.2H451.6L452 658.6H450.8L450 657.6H442.4L446.7 662.4L441.9 667.4H450.3L451 666.2H452.2L451.6 670H437.4L443.6 662.6Z" fill="#2a8fe6"/><rect x="432.7" y="673" width="24.5" height="2" fill="#99c3ec"/><path d="M1082 664.6L1085.7 660.6L1089.4 664.6" fill="none" stroke="#ddd" stroke-width="1"/><path d="M1095.5 661.2H1097.5L1100.5 658.7V667.3L1097.5 664.8H1095.5Z" fill="none" stroke="#ddd" stroke-width="0.9"/><path d="M1101.8 661.5L1104.3 664M1104.3 661.5L1101.8 664" stroke="#ddd" stroke-width="0.9"/><rect x="1113" y="659" width="7.6" height="5" fill="none" stroke="#e0e0e0" stroke-width="0.75"/><path d="M1115 666.2H1119.5M1117.2 664V666.2M1111.3 660.5V666.5M1111.3 666.5H1115" stroke="#e0e0e0" stroke-width="0.75"/><rect x="1110.2" y="658.3" width="2.4" height="2.4" fill="none" stroke="#e0e0e0" stroke-width="0.6"/><text x="1145" y="659.1" font-size="7.6" fill="#e8e8e8" text-anchor="middle" font-family="Liberation Sans">12:16</text><text x="1145" y="670.4" font-size="7.3" fill="#e8e8e8" text-anchor="middle" font-family="Liberation Sans">07/04/2019</text><rect x="1174.5" y="657.5" width="11" height="9" fill="#f0f0f0"/><path d="M1176 659.5H1184M1176 661.5H1184M1176 663.5H1182" stroke="#444" stroke-width="0.7"/><circle cx="1184.5" cy="667.3" r="5" fill="#1a1a1a" stroke="#777" stroke-width="0.8"/><text x="1184.5" y="670" font-size="6.5" fill="#fff" text-anchor="middle" font-family="Liberation Sans">20</text><path d="M1197.5 650V675" stroke="#555" stroke-width="0.8"/></svg>
<svg class="a" style="left:0;top:0" width="1200" height="675" viewBox="0 0 1200 675">
<defs><clipPath id="gv"><rect x="133" y="81" width="1055" height="544"/></clipPath></defs>
<g clip-path="url(#gv)" font-family="Liberation Sans">
<rect x="133" y="81" width="1055" height="544" fill="#fff"/>
<polygon points="254.5,495.5 420.3,495.5 503.2,351.5 420.3,207.4 254.5,207.4 171.6,351.5" fill="#f4e9e5"/>
<line x1="133" y1="495.5" x2="1187" y2="495.5" stroke="#4c4c4c" stroke-width="1.25"/>
<path d="M1184.6 492.3 L1188 495.5 L1184.6 498.7" fill="none" stroke="#4c4c4c" stroke-width="1"/>
<line x1="337.43" y1="81" x2="337.43" y2="625" stroke="#4c4c4c" stroke-width="1.25"/>
<path d="M334.23 84.6 L337.43 81.3 L340.63 84.6" fill="none" stroke="#4c4c4c" stroke-width="1"/>
<text transform="translate(171.61 504.80) scale(0.87 1)" font-size="8.5" fill="#3a3a3a" text-anchor="middle">-8</text>
<text transform="translate(213.07 504.80) scale(0.87 1)" font-size="8.5" fill="#3a3a3a" text-anchor="middle">-6</text>
<text transform="translate(254.52 504.80) scale(0.87 1)" font-size="8.5" fill="#3a3a3a" text-anchor="middle">-4</text>
<text transform="translate(295.98 504.80) scale(0.87 1)" font-size="8.5" fill="#3a3a3a" text-anchor="middle">-2</text>
<text transform="translate(378.88 504.80) scale(0.87 1)" font-size="8.5" fill="#3a3a3a" text-anchor="middle">2</text>
<text transform="translate(420.34 504.80) scale(0.87 1)" font-size="8.5" fill="#3a3a3a" text-anchor="middle">4</text>
<text transform="translate(461.79 504.80) scale(0.87 1)" font-size="8.5" fill="#3a3a3a" text-anchor="middle">6</text>
<text transform="translate(503.25 504.80) scale(0.87 1)" font-size="8.5" fill="#3a3a3a" text-anchor="middle">8</text>
<text transform="translate(544.70 504.80) scale(0.87 1)" font-size="8.5" fill="#3a3a3a" text-anchor="middle">10</text>
<text transform="translate(586.15 504.80) scale(0.87 1)" font-size="8.5" fill="#3a3a3a" text-anchor="middle">12</text>
<text transform="translate(627.61 504.80) scale(0.87 1)" font-size="8.5" fill="#3a3a3a" text-anchor="middle">14</text>
<text transform="translate(669.06 504.80) scale(0.87 1)" font-size="8.5" fill="#3a3a3a" text-anchor="middle">16</text>
<text transform="translate(710.52 504.80) scale(0.87 1)" font-size="8.5" fill="#3a3a3a" text-anchor="middle">18</text>
<text transform="translate(751.97 504.80) scale(0.87 1)" font-size="8.5" fill="#3a3a3a" text-anchor="middle">20</text>
<text transform="translate(793.42 504.80) scale(0.87 1)" font-size="8.5" fill="#3a3a3a" text-anchor="middle">22</text>
<text transform="translate(834.88 504.80) scale(0.87 1)" font-size="8.5" fill="#3a3a3a" text-anchor="middle">24</text>
<text transform="translate(876.33 504.80) scale(0.87 1)" font-size="8.5" fill="#3a3a3a" text-anchor="middle">26</text>
<text transform="translate(917.79 504.80) scale(0.87 1)" font-size="8.5" fill="#3a3a3a" text-anchor="middle">28</text>
<text transform="translate(959.24 504.80) scale(0.87 1)" font-size="8.5" fill="#3a3a3a" text-anchor="middle">30</text>
<text transform="translate(1000.69 504.80) scale(0.87 1)" font-size="8.5" fill="#3a3a3a" text-anchor="middle">32</text>
<text transform="translate(1042.15 504.80) scale(0.87 1)" font-size="8.5" fill="#3a3a3a" text-anchor="middle">34</text>
<text transform="translate(1083.60 504.80) scale(0.87 1)" font-size="8.5" fill="#3a3a3a" text-anchor="middle">36</text>
<text transform="translate(1125.06 504.80) scale(0.87 1)" font-size="8.5" fill="#3a3a3a" text-anchor="middle">38</text>
<text transform="translate(1166.51 504.80) scale(0.87 1)" font-size="8.5" fill="#3a3a3a" text-anchor="middle">40</text>
<text transform="translate(334.43 504.80) scale(0.87 1)" font-size="8.5" fill="#3a3a3a" text-anchor="end">0</text>
<text transform="translate(331.93 581.43) scale(0.87 1)" font-size="8.5" fill="#3a3a3a" text-anchor="end">-4</text>
<text transform="translate(331.93 539.87) scale(0.87 1)" font-size="8.5" fill="#3a3a3a" text-anchor="end">-2</text>
<text transform="translate(331.93 456.73) scale(0.87 1)" font-size="8.5" fill="#3a3a3a" text-anchor="end">2</text>
<text transform="translate(331.93 415.17) scale(0.87 1)" font-size="8.5" fill="#3a3a3a" text-anchor="end">4</text>
<text transform="translate(331.93 373.60) scale(0.87 1)" font-size="8.5" fill="#3a3a3a" text-anchor="end">6</text>
<text transform="translate(331.93 332.04) scale(0.87 1)" font-size="8.5" fill="#3a3a3a" text-anchor="end">8</text>
<text transform="translate(331.93 290.47) scale(0.87 1)" font-size="8.5" fill="#3a3a3a" text-anchor="end">10</text>
<text transform="translate(331.93 248.90) scale(0.87 1)" font-size="8.5" fill="#3a3a3a" text-anchor="end">12</text>
<text transform="translate(331.93 207.34) scale(0.87 1)" font-size="8.5" fill="#3a3a3a" text-anchor="end">14</text>
<text transform="translate(331.93 165.77) scale(0.87 1)" font-size="8.5" fill="#3a3a3a" text-anchor="end">16</text>
<text transform="translate(331.93 124.21) scale(0.87 1)" font-size="8.5" fill="#3a3a3a" text-anchor="end">18</text>
<path d="M171.6 495.5 V497.5 M213.1 495.5 V497.5 M254.5 495.5 V497.5 M296.0 495.5 V497.5 M337.4 495.5 V497.5 M378.9 495.5 V497.5 M420.3 495.5 V497.5 M461.8 495.5 V497.5 M503.2 495.5 V497.5 M544.7 495.5 V497.5 M586.2 495.5 V497.5 M627.6 495.5 V497.5 M669.1 495.5 V497.5 M710.5 495.5 V497.5 M752.0 495.5 V497.5 M793.4 495.5 V497.5 M834.9 495.5 V497.5 M876.3 495.5 V497.5 M917.8 495.5 V497.5 M959.2 495.5 V497.5 M1000.7 495.5 V497.5 M1042.1 495.5 V497.5 M1083.6 495.5 V497.5 M1125.1 495.5 V497.5 M1166.5 495.5 V497.5 M334.93 620.2 H337.43 M334.93 578.6 H337.43 M334.93 537.1 H337.43 M334.93 453.9 H337.43 M334.93 412.4 H337.43 M334.93 370.8 H337.43 M334.93 329.2 H337.43 M334.93 287.7 H337.43 M334.93 246.1 H337.43 M334.93 204.5 H337.43 M334.93 163.0 H337.43 M334.93 121.4 H337.43" stroke="#4c4c4c" stroke-width="1"/>
<polygon points="254.5,495.5 420.3,495.5 503.2,351.5 420.3,207.4 254.5,207.4 171.6,351.5" fill="none" stroke="#bf6a3c" stroke-width="1.25"/>
<line x1="254.5" y1="495.5" x2="420.3" y2="207.4" stroke="#474747" stroke-width="1"/>
<line x1="420.3" y1="495.5" x2="254.5" y2="207.4" stroke="#474747" stroke-width="1"/>
<line x1="171.6" y1="351.5" x2="503.2" y2="351.5" stroke="#474747" stroke-width="1"/>
<line x1="339.2" y1="349.5" x2="458" y2="279.4" stroke="#4a4a4a" stroke-width="1" stroke-dasharray="5.2,4"/>
<line x1="648.3" y1="495.5" x2="814.2" y2="370.8" stroke="#474747" stroke-width="1"/>
<line x1="731.2" y1="495.5" x2="814.2" y2="370.8" stroke="#474747" stroke-width="1"/>
<line x1="897.1" y1="495.5" x2="814.2" y2="370.8" stroke="#474747" stroke-width="1"/>
<line x1="980.0" y1="495.5" x2="814.2" y2="370.8" stroke="#474747" stroke-width="1"/>
<line x1="1000.7" y1="495.5" x2="1031.8" y2="312.2" stroke="#474747" stroke-width="1"/>
<line x1="1062.9" y1="495.5" x2="1031.8" y2="312.2" stroke="#474747" stroke-width="1"/>
<line x1="731.2" y1="495.5" x2="897.1" y2="495.5" stroke="#474747" stroke-width="1.6"/>
<circle cx="503.2" cy="351.5" r="3.3" fill="#404040" stroke="#303030" stroke-width="0.7"/>
<circle cx="420.3" cy="207.4" r="3.3" fill="#404040" stroke="#303030" stroke-width="0.7"/>
<circle cx="254.5" cy="207.4" r="3.3" fill="#404040" stroke="#303030" stroke-width="0.7"/>
<circle cx="171.6" cy="351.5" r="3.3" fill="#404040" stroke="#303030" stroke-width="0.7"/>
<circle cx="337.4" cy="351.5" r="2.2" fill="#333" stroke="#222" stroke-width="0.7"/>
<circle cx="814.2" cy="495.5" r="2.2" fill="#333" stroke="#222" stroke-width="0.7"/>
<circle cx="814.2" cy="370.8" r="2.2" fill="#333" stroke="#222" stroke-width="0.7"/>
<circle cx="1031.8" cy="495.5" r="2.2" fill="#333" stroke="#222" stroke-width="0.7"/>
<circle cx="1031.8" cy="312.2" r="2.2" fill="#333" stroke="#222" stroke-width="0.7"/>
<circle cx="814.2" cy="620.2" r="2.2" fill="#333" stroke="#222" stroke-width="0.7"/>
<circle cx="254.5" cy="495.5" r="3.3" fill="#7373ff" stroke="#333" stroke-width="0.7"/>
<circle cx="420.3" cy="495.5" r="3.3" fill="#7373ff" stroke="#333" stroke-width="0.7"/>
<circle cx="648.3" cy="495.5" r="3.3" fill="#7373ff" stroke="#333" stroke-width="0.7"/>
<circle cx="1000.7" cy="495.5" r="3.3" fill="#7373ff" stroke="#333" stroke-width="0.7"/>
<circle cx="460.5" cy="277.9" r="3.3" fill="#7373ff" stroke="#333" stroke-width="0.7"/>
<circle cx="731.2" cy="495.5" r="3.5" fill="#0000f0" stroke="#000080" stroke-width="0.7"/>
<circle cx="897.1" cy="495.5" r="3.5" fill="#0000f0" stroke="#000080" stroke-width="0.7"/>
<circle cx="980.0" cy="495.5" r="3.5" fill="#0000f0" stroke="#000080" stroke-width="0.7"/>
<circle cx="1062.9" cy="495.5" r="3.5" fill="#0000f0" stroke="#000080" stroke-width="0.7"/>
<text x="260.0" y="201.2" font-size="10.3" fill="#7a7a7a" text-anchor="middle">E</text>
<text x="426.0" y="201.2" font-size="10.3" fill="#7a7a7a" text-anchor="middle">D</text>
<text x="509.3" y="344.9" font-size="10.3" fill="#7a7a7a" text-anchor="middle">C</text>
<text x="176.7" y="345.0" font-size="10.3" fill="#7a7a7a" text-anchor="middle">F</text>
<text x="259.8" y="488.5" font-size="10.3" fill="#9999ff" text-anchor="middle">A</text>
<text x="425.8" y="487.9" font-size="10.3" fill="#9999ff" text-anchor="middle">B</text>
<text x="466.7" y="271.7" font-size="10.3" fill="#9999ff" text-anchor="middle">O</text>
<text x="654.0" y="489.2" font-size="10.3" fill="#9999ff" text-anchor="middle">G</text>
<text x="737.0" y="489.2" font-size="10.3" fill="#7f7fff" text-anchor="middle">H</text>
<text x="900.0" y="488.5" font-size="10.3" fill="#5a5aff" text-anchor="middle">I</text>
<text x="985.2" y="488.7" font-size="10.3" fill="#3333ff" text-anchor="middle">J</text>
<text x="1006.4" y="488.7" font-size="10.3" fill="#9999ff" text-anchor="middle">P</text>
<text x="1068.8" y="488.7" font-size="10.3" fill="#3333ff" text-anchor="middle">Q</text>
<text x="819.4" y="491.0" font-size="10.3" fill="#7a7a7a" text-anchor="middle">K</text>
<text x="1036.4" y="490.7" font-size="10.3" fill="#7a7a7a" text-anchor="middle">R</text>
<text x="820.2" y="366.8" font-size="10.3" fill="#7a7a7a" text-anchor="middle">M</text>
<text x="1036.4" y="308.0" font-size="10.3" fill="#7a7a7a" text-anchor="middle">S</text>
<text x="818.5" y="616.2" font-size="10.3" fill="#7a7a7a" text-anchor="middle">L</text>
<text x="380.4" y="260.9" font-size="12.8" fill="#333" text-anchor="middle" font-family="Liberation Serif">8</text>
<text x="477.3" y="280.2" font-size="12.8" fill="#333" text-anchor="middle" font-family="Liberation Serif">8</text>
<text x="909.0" y="426.9" font-size="12.8" fill="#333" text-anchor="middle" font-family="Liberation Serif">10</text>
<text transform="translate(406.00 323.39) scale(0.92 1)" font-size="10.8" fill="#555" text-anchor="middle">h</text>
<text transform="translate(766.00 427.39) scale(0.92 1)" font-size="10.8" fill="#555" text-anchor="middle">n</text>
<text transform="translate(740.80 440.89) scale(0.92 1)" font-size="10.8" fill="#555" text-anchor="middle">m</text>
<text transform="translate(866.00 427.39) scale(0.92 1)" font-size="10.8" fill="#555" text-anchor="middle">q</text>
<text transform="translate(892.00 440.89) scale(0.92 1)" font-size="10.8" fill="#555" text-anchor="middle">r</text>
<text transform="translate(815.90 506.29) scale(0.92 1)" font-size="10.8" fill="#555" text-anchor="middle">p</text>
<text transform="translate(813.60 433.12) scale(0.915 1)" font-size="10.6" fill="#444" text-anchor="start">KM = 6</text>
<rect x="1029" y="392.3" width="49" height="18.3" fill="#fff"/>
<text transform="translate(1031.40 403.42) scale(0.915 1)" font-size="10.6" fill="#444" text-anchor="start">RS = 8.82</text>
<text transform="translate(1006.70 402.89) scale(0.92 1)" font-size="10.8" fill="#555" text-anchor="middle">f</text>
<text x="1010.5" y="405.9" font-size="6.8" fill="#555" text-anchor="middle">1</text>
<text x="339.0" y="351.4" font-size="9.7" fill="#b5552a" text-anchor="start">poligono1</text>
<text x="329.8" y="356.2" font-size="9" fill="#444" text-anchor="middle">s</text>
<text x="347.4" y="356.9" font-size="9" fill="#444" text-anchor="middle">a</text>
<text x="338.0" y="339.0" font-size="7" fill="#555" text-anchor="middle">t</text>
<text x="341.0" y="344.6" font-size="8" fill="#666" text-anchor="middle">N</text>
</g>
<path d="M1193.5 336.5 L1190.5 339.8 L1193.5 343 Z" fill="#fff" stroke="#777" stroke-width="0.8"/>
<rect x="1196" y="336" width="3" height="37" fill="#a9a9a9"/>
</svg>
</body></html>
